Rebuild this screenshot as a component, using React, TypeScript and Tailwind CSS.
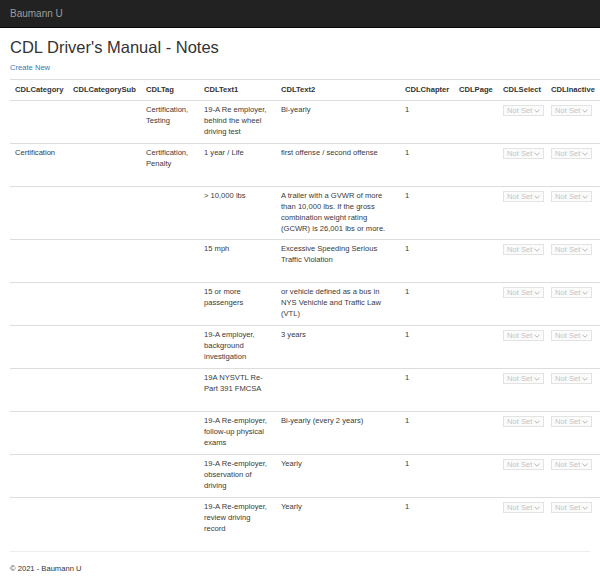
import React from 'react';

type Note = {
  category: string;
  sub: string;
  tag: string;
  text1: string;
  text2: string;
  chapter: string;
  page: string;
};

const notes: Note[] = [
  { category: '', sub: '', tag: 'Certification, Testing', text1: '19-A Re employer, behind the wheel driving test', text2: 'Bi-yearly', chapter: '1', page: '' },
  { category: 'Certification', sub: '', tag: 'Certification, Penalty', text1: '1 year / Life', text2: 'first offense / second offense', chapter: '1', page: '' },
  { category: '', sub: '', tag: '', text1: '> 10,000 lbs', text2: 'A trailer with a GVWR of more than 10,000 lbs. If the gross combination weight rating (GCWR) is 26,001 lbs or more.', chapter: '1', page: '' },
  { category: '', sub: '', tag: '', text1: '15 mph', text2: 'Excessive Speeding Serious Traffic Violation', chapter: '1', page: '' },
  { category: '', sub: '', tag: '', text1: '15 or more passengers', text2: 'or vehicle defined as a bus in NYS Vehichle and Traffic Law (VTL)', chapter: '1', page: '' },
  { category: '', sub: '', tag: '', text1: '19-A employer, background investigation', text2: '3 years', chapter: '1', page: '' },
  { category: '', sub: '', tag: '', text1: '19A NYSVTL Re-Part 391 FMCSA', text2: '', chapter: '1', page: '' },
  { category: '', sub: '', tag: '', text1: '19-A Re-employer, follow-up physical exams', text2: 'Bi-yearly (every 2 years)', chapter: '1', page: '' },
  { category: '', sub: '', tag: '', text1: '19-A Re-employer, observation of driving', text2: 'Yearly', chapter: '1', page: '' },
  { category: '', sub: '', tag: '', text1: '19-A Re-employer, review driving record', text2: 'Yearly', chapter: '1', page: '' },
];

const columns = [
  { label: 'CDLCategory', w: 'w-[58px]' },
  { label: 'CDLCategorySub', w: 'w-[73px]' },
  { label: 'CDLTag', w: 'w-[58px]' },
  { label: 'CDLText1', w: 'w-[77px]' },
  { label: 'CDLText2', w: 'w-[124px]' },
  { label: 'CDLChapter', w: 'w-[54px]' },
  { label: 'CDLPage', w: 'w-[44px]' },
  { label: 'CDLSelect', w: 'w-[48px]' },
  { label: 'CDLInactive', w: 'w-[54px]' },
];

const NotSet = () => (
  <span className="inline-flex items-center gap-[2px] h-[11px] px-[3px] border border-[#e3e3e3] bg-[#fbfbfb] text-[#c4c4c4] text-[7.6px] leading-none whitespace-nowrap">
    Not Set
    <svg width="6" height="4" viewBox="0 0 6 4" fill="none" stroke="#b5b5b5" strokeWidth="1">
      <path d="M0.5 0.8 L3 3.2 L5.5 0.8" />
    </svg>
  </span>
);

const App: React.FC = () => {
  return (
    <div className="min-h-[581px] bg-white text-[#333] font-['Liberation_Sans',Arial,sans-serif]">
      <nav className="h-[28px] bg-[#222] border-b border-[#080808] flex items-center px-[10px]">
        <span className="text-[10px] text-[#9d9d9d]">Baumann U</span>
      </nav>

      <div className="px-[10px]">
        <h2 className="mt-[10px] mb-[5px] text-[16.5px] leading-[19px] font-normal">CDL Driver's Manual - Notes</h2>
        <p className="mb-[6px] text-[7.6px] leading-[11px]">
          <a href="#" className="text-[#337ab7]">Create New</a>
        </p>

        <table className="w-[590px] table-fixed border-collapse border-t border-[#ddd] mb-[11px] text-[7.6px] leading-[10.8px] text-[#3a3a3a]">
          <thead>
            <tr className="border-b border-[#ddd]">
              {columns.map((c) => (
                <th key={c.label} className={`${c.w} px-[5px] py-[4.5px] text-left font-bold whitespace-nowrap text-[#333]`}>
                  {c.label}
                </th>
              ))}
            </tr>
          </thead>
          <tbody>
            {notes.map((n, i) => (
              <tr key={i} className={`h-[43px] align-top ${i > 0 ? 'border-t border-[#ddd]' : ''}`}>
                <td className="px-[5px] py-[4.5px]">{n.category}</td>
                <td className="px-[5px] py-[4.5px]">{n.sub}</td>
                <td className="px-[5px] py-[4.5px]">{n.tag}</td>
                <td className="px-[5px] py-[4.5px]">{n.text1}</td>
                <td className="px-[5px] py-[4.5px]">{n.text2}</td>
                <td className="px-[5px] py-[4.5px]">{n.chapter}</td>
                <td className="px-[5px] py-[4.5px]">{n.page}</td>
                <td className="px-[5px] py-[4.5px] whitespace-nowrap"><NotSet /></td>
                <td className="px-[5px] py-[4.5px] whitespace-nowrap"><NotSet /></td>
              </tr>
            ))}
          </tbody>
        </table>

        <hr className="border-[#eee] mb-[11px]" />
        <footer className="text-[7.6px] leading-[11px]">© 2021 - Baumann U</footer>
      </div>
    </div>
  );
};

export default App;
